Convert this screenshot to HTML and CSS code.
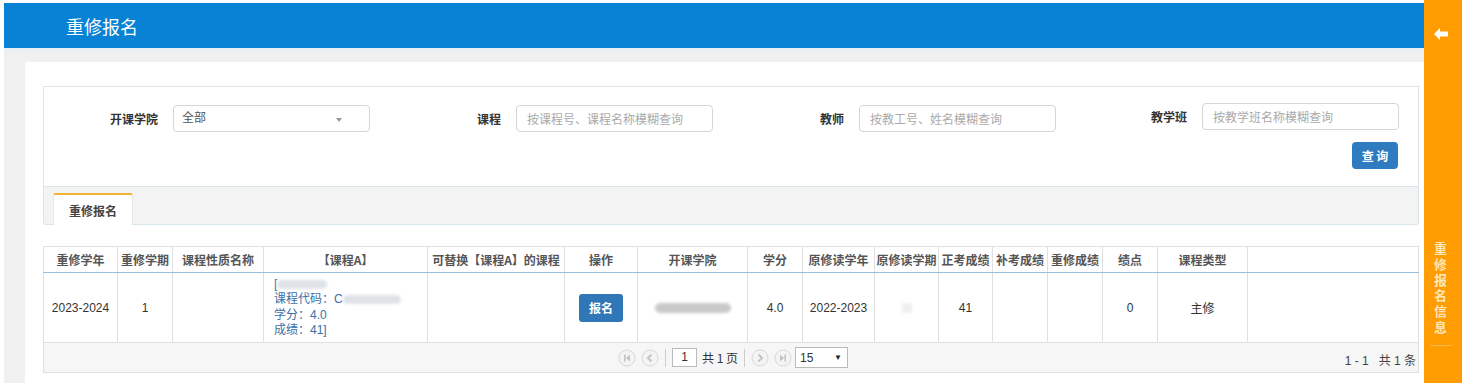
FILE: index.html
```html
<!DOCTYPE html>
<html lang="zh-CN">
<head>
  <meta charset="UTF-8" />
  <title>重修报名</title>
  <link rel="stylesheet" href="styles.css">
</head>
<body>
  <div class="page">
    <div class="main">
      <header class="topbar">
        <h1>重修报名</h1>
      </header>

      <div class="content">
        <div class="card">
          <form class="search-panel">
            <div class="search-grid">
              <div class="field">
                <label>开课学院</label>
                <div class="select-box">全部<span class="caret"></span></div>
              </div>
              <div class="field">
                <label>课程</label>
                <input type="text" placeholder="按课程号、课程名称模糊查询">
              </div>
              <div class="field">
                <label>教师</label>
                <input type="text" placeholder="按教工号、姓名模糊查询">
              </div>
              <div class="field field-up">
                <label>教学班</label>
                <input type="text" placeholder="按教学班名称模糊查询">
              </div>
            </div>
            <div class="search-actions">
              <button type="button" class="btn-query">查 询</button>
            </div>
          </form>

          <div class="tab-bar">
            <div class="tab active">重修报名</div>
          </div>

          <table class="grid">
            <colgroup>
              <col style="width:74px"><col style="width:55px"><col style="width:91px">
              <col style="width:164px"><col style="width:137px"><col style="width:73px">
              <col style="width:110px"><col style="width:55px"><col style="width:72px">
              <col style="width:64px"><col style="width:54px"><col style="width:55px">
              <col style="width:55px"><col style="width:55px"><col style="width:90px">
              <col>
            </colgroup>
            <thead>
              <tr>
                <th>重修学年</th>
                <th>重修学期</th>
                <th>课程性质名称</th>
                <th>【课程A】</th>
                <th>可替换【课程A】的课程</th>
                <th>操作</th>
                <th>开课学院</th>
                <th>学分</th>
                <th>原修读学年</th>
                <th>原修读学期</th>
                <th>正考成绩</th>
                <th>补考成绩</th>
                <th>重修成绩</th>
                <th>绩点</th>
                <th>课程类型</th>
                <th class="last"></th>
              </tr>
            </thead>
            <tbody>
              <tr>
                <td>2023-2024</td>
                <td>1</td>
                <td></td>
                <td class="course">
                  <div>[<span class="blur" style="width:50px"></span></div>
                  <div>课程代码：C<span class="blur" style="width:58px"></span></div>
                  <div>学分：4.0</div>
                  <div>成绩：41]</div>
                </td>
                <td></td>
                <td><button type="button" class="btn-apply">报名</button></td>
                <td><span class="blur blur-wide"></span></td>
                <td>4.0</td>
                <td>2022-2023</td>
                <td><span class="blur blur-dot"></span></td>
                <td>41</td>
                <td></td>
                <td></td>
                <td>0</td>
                <td>主修</td>
                <td class="last"></td>
              </tr>
            </tbody>
            <tfoot>
              <tr>
                <td colspan="16">
                  <div class="pager">
                    <div class="pager-center">
                      <span class="pg-btn">
                        <svg width="18" height="18" viewBox="0 0 18 18"><circle cx="9" cy="9" r="8" fill="#f4f4f4" stroke="#d9d9d9"/><rect x="6" y="5.5" width="1.6" height="7" fill="#c4c4c4"/><path d="M12 5.5 L8 9 L12 12.5 Z" fill="#c4c4c4"/></svg>
                      </span>
                      <span class="pg-btn">
                        <svg width="18" height="18" viewBox="0 0 18 18"><circle cx="9" cy="9" r="8" fill="#f4f4f4" stroke="#d9d9d9"/><path d="M10.5 5.5 L7 9 L10.5 12.5" fill="none" stroke="#c4c4c4" stroke-width="2"/></svg>
                      </span>
                      <span class="pg-sep"></span>
                      <span class="pg-input">1</span>
                      <span class="pg-text">共 1 页</span>
                      <span class="pg-sep"></span>
                      <span class="pg-btn">
                        <svg width="18" height="18" viewBox="0 0 18 18"><circle cx="9" cy="9" r="8" fill="#f4f4f4" stroke="#d9d9d9"/><path d="M7.5 5.5 L11 9 L7.5 12.5" fill="none" stroke="#c4c4c4" stroke-width="2"/></svg>
                      </span>
                      <span class="pg-btn">
                        <svg width="18" height="18" viewBox="0 0 18 18"><circle cx="9" cy="9" r="8" fill="#f4f4f4" stroke="#d9d9d9"/><path d="M6 5.5 L10 9 L6 12.5 Z" fill="#c4c4c4"/><rect x="10.4" y="5.5" width="1.6" height="7" fill="#c4c4c4"/></svg>
                      </span>
                      <span class="pg-select">15<span class="pg-caret">▼</span></span>
                    </div>
                    <div class="pager-info">1 - 1&nbsp;&nbsp;&nbsp;共 1 条</div>
                  </div>
                </td>
              </tr>
            </tfoot>
          </table>
        </div>
      </div>
    </div>

    <aside class="side-tab">
      <svg class="side-arrow" width="14" height="12" viewBox="0 0 14 12"><path d="M0 6 L6 0 L6 3.5 L14 3.5 L14 8.5 L6 8.5 L6 12 Z" fill="#fff"/></svg>
      <div class="side-text">重修报名信息</div>
      <div class="side-line"></div>
    </aside>
  </div>
</body>
</html>
```

FILE: styles.css
```css
* {
  box-sizing: border-box;
}

html, body {
  margin: 0;
  height: 100%;
}

body {
  font-family: "Liberation Sans", Arial, "Noto Sans CJK SC", sans-serif;
  font-size: 12px;
  color: #333;
  background: #fff;
  overflow: hidden;
}

.page {
  display: flex;
  height: 383px;
}

.main {
  flex: 1;
  padding: 3px 0 0 4px;
  display: flex;
  flex-direction: column;
  min-width: 0;
}

/* top title bar */
.topbar {
  height: 45px;
  background: #0782d5;
  display: flex;
  align-items: center;
  padding-left: 62px;
}

.topbar h1 {
  margin: 0;
  color: #fff;
  font-family: "Noto Sans CJK SC", sans-serif;
  font-weight: normal;
  font-size: 18px;
}

.content {
  flex: 1;
  background: linear-gradient(#e6eff6 0, #f0f0f0 5px);
  padding: 14px 0 0 21px;
}

.card {
  background: #fff;
  height: 100%;
  padding: 24px 5px 0 18px;
}

/* search form */
.search-panel {
  border: 1px solid #e4e4e4;
  border-bottom: none;
  height: 100px;
  padding-top: 15px;
}

.search-grid {
  display: grid;
  grid-template-columns: 343px 343px 343px 1fr;
}

.field {
  display: flex;
  align-items: center;
  padding-top: 3px;
}

.field-up {
  padding-top: 0;
  margin-top: -1px;
}

.field label {
  width: 129px;
  text-align: right;
  padding-right: 15px;
  flex: none;
  font-family: "Noto Sans CJK SC", sans-serif;
  font-weight: bold;
  font-size: 12px;
  color: #333;
}

.field input,
.select-box {
  width: 197px;
  height: 27px;
  border: 1px solid #d5d5d5;
  border-radius: 4px;
  padding: 0 10px;
  font-family: "Noto Sans CJK SC", sans-serif;
  font-size: 12px;
  color: #555;
  outline: none;
}

.field input::placeholder {
  color: #aaa;
}

.select-box {
  position: relative;
  display: flex;
  align-items: center;
  padding-left: 8px;
  padding-bottom: 4px;
}

.caret {
  position: absolute;
  right: 27px;
  top: 12px;
  border-left: 3px solid transparent;
  border-right: 3px solid transparent;
  border-top: 4px solid #999;
}

.search-actions {
  display: flex;
  justify-content: flex-end;
  padding: 10px 20px 0 0;
}

.btn-query {
  width: 46px;
  height: 27px;
  border: none;
  border-radius: 4px;
  background: #2e7bbf;
  color: #fff;
  font-family: "Noto Sans CJK SC", sans-serif;
  font-weight: bold;
  font-size: 12px;
  padding: 0;
}

/* tab strip */
.tab-bar {
  height: 39px;
  background: #f3f3f3;
  border: 1px solid #d8e5ea;
  border-radius: 0 0 3px 3px;
  padding: 6px 0 0 9px;
  display: flex;
  align-items: flex-end;
}

.tab {
  width: 80px;
  height: 32px;
  margin-bottom: -1px;
  background: #fff;
  border-top: 2px solid #f2b233;
  border-left: 1px solid #e2e8ea;
  border-right: 1px solid #e2e8ea;
  border-radius: 3px 3px 0 0;
  display: flex;
  align-items: center;
  justify-content: center;
  font-family: "Noto Sans CJK SC", sans-serif;
  font-weight: bold;
  font-size: 12px;
  color: #444;
}

/* result table */
.grid {
  margin-top: 21px;
  width: 1376px;
  border-collapse: collapse;
  table-layout: fixed;
  font-size: 12px;
}

.grid th,
.grid td {
  border: 1px solid #e0e0e0;
  text-align: center;
  padding: 0;
}

.grid th {
  height: 26px;
  border-bottom: 1px solid #98bedb;
  font-family: "Noto Sans CJK SC", sans-serif;
  font-weight: bold;
  color: #555;
  white-space: nowrap;
}

.grid tbody td {
  height: 70px;
  color: #333;
}

.grid td.course {
  text-align: left;
  padding-left: 10px;
  color: #3a6fa8;
  line-height: 15.5px;
}

.blur {
  display: inline-block;
  height: 9px;
  vertical-align: middle;
  background: #dfe3e8;
  border-radius: 5px;
  filter: blur(1.5px);
}

.blur-wide {
  width: 76px;
  height: 10px;
  background: #c9c9c9;
}

.blur-dot {
  width: 10px;
  height: 10px;
  background: #eee;
  border-radius: 2px;
}

.btn-apply {
  width: 44px;
  height: 28px;
  border: none;
  border-radius: 3px;
  background: #2f77b6;
  color: #fff;
  font-family: "Noto Sans CJK SC", sans-serif;
  font-size: 12px;
  font-weight: bold;
  padding: 0;
}

.grid tfoot td {
  height: 30px;
  background: #f6f6f6;
}

.pager {
  position: relative;
  display: flex;
  justify-content: center;
  align-items: center;
  height: 28px;
}

.pager-center {
  display: flex;
  align-items: center;
  gap: 5px;
  margin-left: 4px;
}

.pg-btn {
  display: flex;
}

.pg-sep {
  width: 1px;
  height: 18px;
  background: #ccc;
  margin: 0 1px;
}

.pg-input {
  width: 25px;
  height: 19px;
  border: 1px solid #bbb;
  background: #fff;
  line-height: 17px;
  text-align: center;
  font-size: 12px;
  color: #333;
}

.pg-text {
  font-family: "Noto Sans CJK SC", sans-serif;
  color: #333;
}

.pg-select {
  width: 53px;
  height: 21px;
  border: 1px solid #bbb;
  background: #fff;
  display: flex;
  align-items: center;
  justify-content: space-between;
  padding: 0 5px 0 4px;
  margin-left: -2px;
  color: #333;
}

.pg-caret {
  font-size: 8px;
  color: #222;
}

.pager-info {
  position: absolute;
  right: 2px;
  top: 7px;
  font-family: "Liberation Sans", "Noto Sans CJK SC", sans-serif;
  color: #444;
}

/* right side tab */
.side-tab {
  width: 38px;
  background: #fe9c01;
  display: flex;
  flex-direction: column;
  align-items: center;
  padding-top: 28px;
}

.side-arrow {
  margin-left: -4px;
}

.side-text {
  margin-top: 200px;
  width: 14px;
  font-family: "Noto Sans CJK SC", sans-serif;
  font-weight: bold;
  font-size: 13px;
  line-height: 15.8px;
  color: #ffe6bb;
  word-break: break-all;
  margin-left: -4px;
}

.side-line {
  margin-top: 10px;
  width: 22px;
  height: 1px;
  background: #f8b84a;
  margin-left: -4px;
}
```
